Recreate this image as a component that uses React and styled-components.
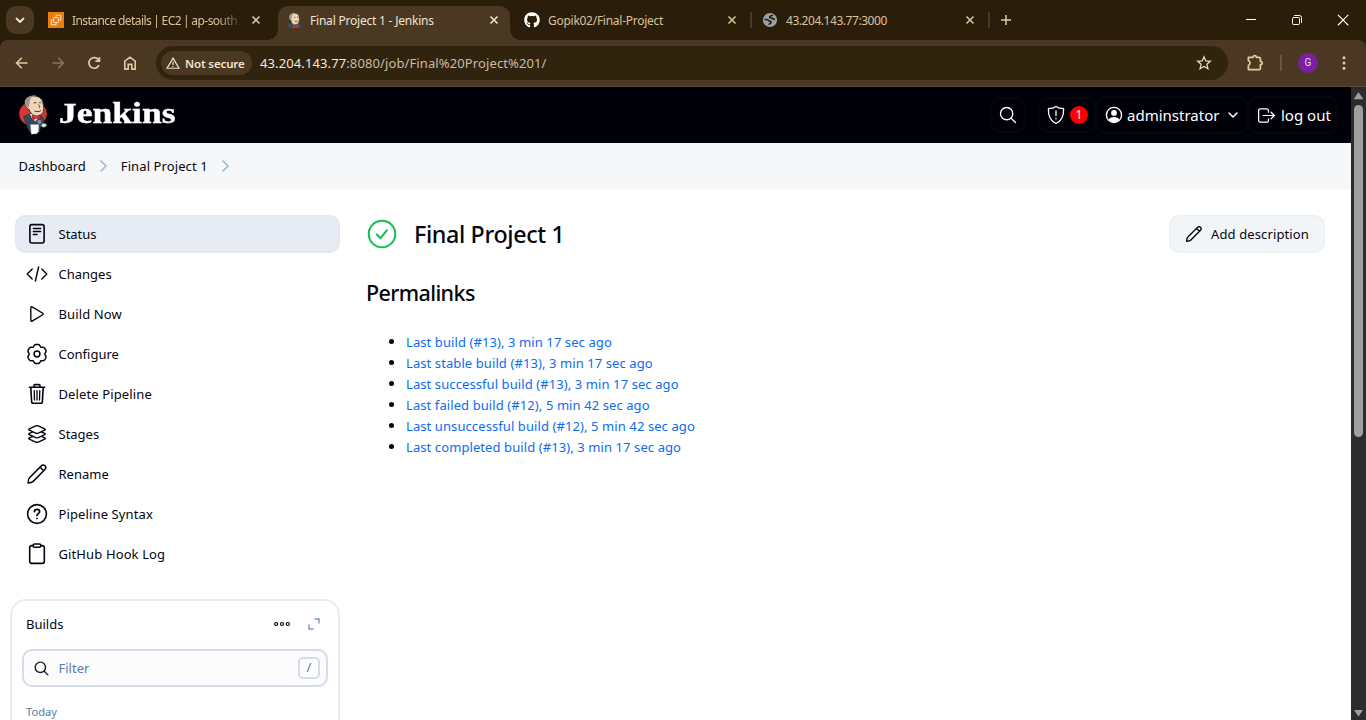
import React from "react";
import styled, { createGlobalStyle, css } from "styled-components";
import { FaGithub } from "react-icons/fa";

const Global = createGlobalStyle`
  * { box-sizing: border-box; }
  html, body { margin: 0; height: 720px; overflow: hidden; background: #fff; }
  body { font-family: "Noto Sans", "Open Sans", sans-serif; font-size: 13px; color: #05050f; }
  svg { display: block; flex: none; }
`;

const Screen = styled.div`
  width: 1366px;
  height: 720px;
  display: flex;
  flex-direction: column;
  overflow: hidden;
`;

const Text = styled.span`
  white-space: nowrap;
  letter-spacing: ${(p) => p.$ls || 0}px;
`;

/* ---------- browser chrome ---------- */
const TabStrip = styled.div`
  height: 40px;
  flex: none;
  display: flex;
  align-items: center;
  padding-left: 6px;
  background: #2a1e0a;
`;
const TabSearch = styled.div`
  width: 28px;
  height: 28px;
  margin-right: 6px;
  border-radius: 10px;
  background: #4a3822;
  display: flex;
  align-items: center;
  justify-content: center;
`;
const Tab = styled.div`
  position: relative;
  width: 232px;
  height: 34px;
  margin: 6px 6px 0 0;
  padding: 0 8px 6px;
  display: flex;
  align-items: center;
  gap: 8px;
  font-size: 12px;
  color: #dac19c;
  ${(p) =>
    p.$active &&
    css`
      color: #f0e4d3;
      background: #4a3822;
      border-radius: 10px 10px 0 0;
      &::before, &::after {
        content: "";
        position: absolute;
        bottom: 0;
        width: 10px;
        height: 10px;
      }
      &::before { left: -10px; background: radial-gradient(circle at 0 0, transparent 9.5px, #4a3822 10px); }
      &::after { right: -10px; background: radial-gradient(circle at 100% 0, transparent 9.5px, #4a3822 10px); }
    `}
`;
const TabTitle = styled.div`
  width: 168px;
  white-space: nowrap;
  letter-spacing: ${(p) => p.$ls || 0}px;
  ${(p) => p.$fade && css`word-spacing: -0.4px; mask-image: linear-gradient(90deg, #000 145px, transparent 172px);`}
`;
const TabDivider = styled.i`
  width: 2px;
  height: 16px;
  margin: 0 2px 0 -4px;
  background: #4a3822;
`;
const WindowButtons = styled.div`
  margin-left: auto;
  display: flex;
  & > * { width: 46px; display: flex; justify-content: center; align-items: center; }
`;
const NewTab = styled.div`
  width: 28px;
  display: flex;
  justify-content: center;
`;

const ToolbarBack = styled.div`
  flex: none;
  background: #2a1e0a;
`;
const Toolbar = styled.div`
  height: 47px;
  padding-left: 4px;
  display: flex;
  align-items: center;
  background: #4a3822;
  border-radius: 8px 8px 0 0;
  border-bottom: 1px solid #5b4a35;
  & > * { flex: none; }
`;
const ToolButton = styled.div`
  width: 36px;
  display: flex;
  justify-content: center;
`;
const MenuButton = styled.div`
  width: 48px;
  padding-left: 18px;
`;
const Omnibox = styled.div`
  width: 1072px;
  height: 34px;
  margin: 0 9px 0 8px;
  padding: 0 16px 0 5px;
  display: flex;
  align-items: center;
  border-radius: 17px;
  background: #30240f;
`;
const SecurityChip = styled.div`
  width: 91px;
  height: 24px;
  margin-right: 8px;
  padding-left: 5px;
  display: flex;
  align-items: center;
  gap: 5px;
  border-radius: 12px;
  background: #4a3822;
  color: #f0e4d3;
  font-size: 11.5px;
  font-weight: 600;
`;
const Url = styled.div`
  flex: 1;
  font-size: 13px;
  color: #c9bba6;
  white-space: nowrap;
  letter-spacing: 0.11px;
  b { font-weight: 400; color: #f4eadc; }
`;
const ToolDivider = styled.i`
  width: 2px;
  height: 16px;
  margin: 0 16px 0 7px;
  background: #6b563a;
`;
const Avatar = styled.div`
  width: 20px;
  height: 20px;
  border-radius: 50%;
  background: #7b1fa2;
  color: #efdcf5;
  font: 10px/20px Roboto, sans-serif;
  text-align: center;
`;

/* ---------- page ---------- */
const Viewport = styled.div`
  flex: 1;
  min-height: 0;
  display: flex;
`;
const Page = styled.div`
  width: 1351px;
  display: flex;
  flex-direction: column;
`;
const ScrollTrack = styled.div`
  width: 15px;
  display: flex;
  flex-direction: column;
  align-items: center;
  padding: 5px 0 3px;
  background: #2c2c2c;
`;
const ScrollThumb = styled.div`
  width: 9px;
  height: 332px;
  margin: 5px 0 auto 0;
  border-radius: 5px;
  background: #9f9f9f;
`;

const Header = styled.header`
  height: 56px;
  flex: none;
  padding: 0 13px 0 18px;
  display: flex;
  align-items: center;
  background: #000008;
  color: #fff;
`;
const Brand = styled.div`
  margin: -4px auto 0 11px;
  font: 700 29px/40px "Liberation Serif", serif;
  -webkit-text-stroke: 0.4px #fff;
  transform: scaleX(1.225);
  transform-origin: 0 50%;
`;
const HeaderButton = styled.div`
  width: ${(p) => p.$w}px;
  height: ${(p) => p.$h || 38}px;
  margin-right: ${(p) => p.$mr || 0}px;
  padding: 0 ${(p) => p.$px || 7}px;
  display: flex;
  align-items: center;
  justify-content: ${(p) => (p.$center ? "center" : "flex-start")};
  gap: ${(p) => p.$gap || 4}px;
  border: 2px solid #06060f;
  border-radius: 10px;
  font-size: 15px;
  ${Text} { margin-right: auto; }
`;
const Badge = styled.div`
  width: 18px;
  height: 18px;
  flex: none;
  border-radius: 50%;
  background: #fe0000;
  font-size: 12px;
  line-height: 18px;
  text-align: center;
`;

const Breadcrumbs = styled.nav`
  height: 46px;
  flex: none;
  padding-left: 18.5px;
  display: flex;
  align-items: center;
  background: #f6f7f9;
  svg { margin: 0 12px; }
`;

const Body = styled.div`
  flex: 1;
  min-height: 0;
  display: flex;
  padding: 26px 26px 0 10px;
`;
const Sidebar = styled.aside`
  width: 330px;
  display: flex;
  flex-direction: column;
`;
const Tasks = styled.div`
  display: flex;
  flex-direction: column;
  gap: 2px;
  padding-left: 5px;
`;
const Task = styled.div`
  height: 38px;
  padding-left: 11px;
  display: flex;
  align-items: center;
  gap: 10.5px;
  border-radius: 10px;
  ${(p) => p.$active && css`background: #e7ebf3; border: 2px solid #e3e8f1; padding-left: 9px;`}
`;
const Builds = styled.section`
  height: 200px;
  flex: none;
  margin-top: 26px;
  padding: 9px 10px;
  border: 2px solid #e8ecf3;
  border-radius: 16px;
`;
const BuildsHead = styled.div`
  height: 28px;
  padding: 0 6px 0 4px;
  display: flex;
  align-items: center;
  span { margin-right: auto; }
  svg + svg { margin-left: 15px; }
`;
const Filter = styled.div`
  height: 38px;
  margin-top: 11px;
  padding: 0 6px 0 8.5px;
  display: flex;
  align-items: center;
  border: 2px solid #d6dbe9;
  border-radius: 10px;
  background: #fcfcfd;
  color: #5c7aaa;
  span { margin: 0 auto 0 9px; }
`;
const Key = styled.kbd`
  width: 22px;
  height: 22px;
  border: 2px solid #d6dbe9;
  border-radius: 5px;
  font: 13px/17px "Noto Sans", sans-serif;
  text-align: center;
`;
const Day = styled.div`
  margin: 17px 0 0 4px;
  font-size: 11.2px;
  line-height: 16px;
  color: #5c7aaa;
`;

const Main = styled.main`
  flex: 1;
  padding-left: 26px;
`;
const TitleRow = styled.div`
  height: 38px;
  display: flex;
  align-items: center;
  padding-left: 1px;
`;
const Title = styled.h1`
  margin: 0 auto 0 17px;
  font-size: 23.3px;
  font-weight: 500;
  line-height: 38px;
  letter-spacing: -0.38px;
`;
const Subtitle = styled.h2`
  margin: 25px 0 23px;
  font-size: 21.5px;
  font-weight: 500;
  line-height: 30px;
  letter-spacing: -0.6px;
`;
const DescriptionButton = styled.div`
  width: 156px;
  height: 38px;
  padding-left: 14px;
  display: flex;
  align-items: center;
  gap: 8px;
  border: 2px solid #edf1f5;
  border-radius: 10px;
  background: #f2f5f8;
`;
const Links = styled.ul`
  margin: 0;
  padding: 0 0 0 23px;
  list-style: none;
`;
const LinkRow = styled.li`
  height: 21px;
  display: flex;
  align-items: center;
  color: #0b6cf2;
  &::before {
    content: "";
    width: 5px;
    height: 5px;
    margin-right: 12px;
    border-radius: 50%;
    background: #05050f;
  }
`;

/* ---------- icons ---------- */
const Line = ({ s = 16, h, vb = "0 0 16 16", w = 1.5, c = "currentColor", children }) => (
  <svg width={s} height={h || s} viewBox={vb} fill="none" stroke={c} strokeWidth={w} strokeLinecap="round" strokeLinejoin="round">
    {children}
  </svg>
);
const Ion = ({ s = 22, w = 32, c, children }) => (
  <Line s={s} vb="0 0 512 512" w={w} c={c}>{children}</Line>
);
const CloseX = ({ c = "#dac19c" }) => (
  <Line w={1.6} c={c}><path d="M4.5 4.5l7 7M11.5 4.5l-7 7" strokeLinecap="butt" /></Line>
);
const SearchGlyph = ({ s, w = 32, c }) => (
  <Ion s={s} w={w} c={c}><path d="M221 64a157 157 0 10157 157A157 157 0 00221 64zM338 338l110 110" /></Ion>
);
const Chevron = ({ c = "#a5b8d8" }) => (
  <Line s={11} vb="0 0 11 16" h={16} c={c} w={1.7}><path d="M3 3l5 5-5 5" /></Line>
);
/* Six-lobed gear outline: notches fall every 60 degrees, starting at the right. */
const gearPath =
  Array.from({ length: 120 }, (_, i) => {
    const a = (i * Math.PI) / 60;
    const r = 9.6 - 1.8 * Math.pow(Math.abs(Math.cos(3 * a)), 5);
    return `${i ? "L" : "M"}${(11 + r * Math.cos(a)).toFixed(2)} ${(11 + r * Math.sin(a)).toFixed(2)}`;
  }).join("") + "Z";

const Pencil = ({ s = 22 }) => (
  <Line s={s} vb="0 0 22 22" w={s > 20 ? 1.5 : 1.7}>
    <path d="M2 20c.1-1.900.300-4.100 1.500-5.300L15.300 2.900c1-1 2.700-1.100 3.700-.1s.9 2.700-.1 3.700L7.200 18.400C6 19.600 3.900 19.900 2 20zM14.200 4.300l3.400 3.400" />
  </Line>
);

const taskIcons = {
  status: <Line s={22} vb="0 0 22 22" w={1.6}><rect x="3.9" y="1.6" width="14.2" height="18.4" rx="2" /><path d="M7.4 5.5h7.2M7.4 8.5h7.2M7.4 11.5h3.6" /></Line>,
  changes: <Line s={22} vb="0 0 22 22" w={1.4}><path d="M6.2 6L1.2 11l5 5M15.8 6l5 5-5 5M12.6 4L9.4 18" /></Line>,
  play: <Ion><path d="M112 111v290c0 17.44 17 28.52 31 20.16l247.9-148.37c12.12-7.25 12.12-26.33 0-33.58L143 90.84c-14-8.36-31 2.72-31 20.16z" /></Ion>,
  gear: <Line s={22} vb="0 0 22 22" w={1.5}><path d={gearPath} /><circle cx="11" cy="11" r="2.9" /></Line>,
  trash: <Line s={22} vb="0 0 22 22" w={1.6}><path d="M3.4 4.2h15.2M8 4V2.6a1 1 0 011-1h4a1 1 0 011 1V4M4.8 4.4l.8 14a1.8 1.8 0 001.8 1.8h7.2a1.8 1.8 0 001.8-1.8l.8-14" /><path d="M8.2 7.6l.3 9.4M11 7.6V17M13.8 7.6l-.3 9.4" strokeWidth="1.3" /></Line>,
  layers: <Ion><path d="M434.8 137.65l-149.36-68.1c-16.19-7.4-42.69-7.4-58.88 0L77.3 137.65c-17.6 8-17.6 21.09 0 29.09l148 67.5c16.89 7.7 44.69 7.7 61.58 0l148-67.5c17.52-8 17.52-21.1-.08-29.09zM160 308.52l-82.7 37.11c-17.6 8-17.6 21.1 0 29.1l148 67.5c16.89 7.69 44.69 7.69 61.58 0l148-67.5c17.6-8 17.6-21.1 0-29.1l-79.94-38.47M160 204.48l-82.8 37.16c-17.6 8-17.6 21.1 0 29.1l148 67.49c16.89 7.7 44.69 7.7 61.58 0l148-67.49c17.7-8 17.7-21.1.1-29.1L352 204.48" /></Ion>,
  pencil: <Pencil />,
  help: <Line s={22} vb="0 0 22 22" w={1.6}><circle cx="11" cy="11" r="9.4" /><path d="M8.4 8.6c.1-3 5.2-3 5.2 0 0 2-2.6 2-2.6 4" strokeWidth="1.8" /><circle cx="11" cy="15.6" r=".5" fill="currentColor" strokeWidth="1" /></Line>,
  clipboard: <Line s={22} vb="0 0 22 22" w={1.6}><path d="M7.2 2.6H5.6a1.9 1.9 0 00-1.9 1.9v14a1.9 1.9 0 001.9 1.9h10.8a1.9 1.9 0 001.9-1.9v-14a1.9 1.9 0 00-1.9-1.9h-1.6" /><rect x="7.2" y="1" width="7.6" height="3.2" rx="1.4" /></Line>,
};

const Butler = () => (
  <svg width="30" height="42" viewBox="0 0 30 42">
    <ellipse cx="15" cy="19.8" rx="13.8" ry="12.4" fill="#d33833" />
    <path d="M5.500 22.500l6-2.500 4 3 6-2.500 4 3.500.500 5-3.500 4.500-1 4.500H11.500L8.500 31z" fill="#33495c" stroke="#1d2c38" strokeWidth=".5" />
    <path d="M12 20L14 24.500l3.500 3 3.500-4-.500-3.500z" fill="#e9ecee" />
    <path d="M7 6.400C9 .9 20.500.2 23.600 5.600c1.900 3.200 2.500 8.600 1.700 11.800-.9 3.600-4.800 5.100-8.400 4.200-3.500-1-4.800-3.600-5.800-6C7.800 14.500 6.300 9 7 6.400z" fill="#f0d6b7" stroke="#231f20" strokeWidth=".8" />
    <path d="M6.900 7.600C7.400 3.200 13 .9 18.400 1.700c-3.900.7-6.200 2-6.600 5.100-.2 2.500-.3 4-1.100 6.600-3-.2-4.200-3.600-3.800-5.800z" fill="#9a9894" />
    <path d="M23 5.200c1.200 1.400 1.800 3.200 1.900 5.200" stroke="#77746f" strokeWidth="1.100" fill="none" />
    <path d="M15.600 9.200c.9-.8 2.100-.8 3-.2M21 9c.7-.6 1.500-.5 2.100.1M20.600 10.600c1.100 1.200 1.700 2.500.3 3.200M16.500 17c2.300 1.200 4.800.6 6.500-.500" stroke="#231f20" strokeWidth=".9" fill="none" />
    <path d="M14 21.300l4 1.600 4.200-2.200.5 4.600-4.400-1-3.900 1.900z" fill="#e0222c" stroke="#7b1418" strokeWidth=".5" />
    <path d="M18 26.500l4.800-1.200 1.300 3.600-3.200 1.900z" fill="#7693a8" stroke="#1d2c38" strokeWidth=".5" />
    <path d="M23.200 31c.9-2.200 5-2 5.300-.2.100 1.600-1.200 2.600-3.200 2.400-1.300-.1-2.200-1-2.100-2.200z" fill="#e6e9eb" stroke="#55606a" strokeWidth=".6" />
    <path d="M12.500 30.400h8.300l-.300 7-1.700 2.400-5.600.400z" fill="#fff" stroke="#8d969e" strokeWidth=".4" />
  </svg>
);
const ButlerFavicon = () => (
  <svg width="16" height="16" viewBox="0 0 16 16">
    <path d="M1.2 16l.6-3.2L5.2 11h6.6l2.6 2 .2 3z" fill="#335061" />
    <path d="M3.4 4C4.4.6 11.4.2 12.7 3.4c.8 2.6.7 6-.2 7.6-1.5 2.2-5 2-6.3.4-.7-1-.9-2-1.1-3C3.3 7.8 3 5.4 3.4 4z" fill="#f0d6b7" stroke="#3c3630" strokeWidth=".5" />
    <path d="M3.2 5C3.6 1.8 6.5.5 9.4.9 6.9 1.7 5.9 3 5.7 5.2L5.1 8C3.4 7.5 3 6.2 3.2 5z" fill="#9b9a97" />
    <path d="M8.3 5.3h1.2M11 5.2h.9M8.6 9c1 .7 2.2.6 3 .1" stroke="#3c3630" strokeWidth=".8" fill="none" />
    <path d="M7 13.2l2.6 1 2.6-1.4.4 2.9-2.9-.8-2.5 1z" fill="#d33833" />
  </svg>
);
const Ec2Favicon = () => (
  <svg width="16" height="16" viewBox="0 0 16 16">
    <rect width="16" height="16" fill="#ed7b12" />
    <g fill="none" stroke="#fff3e2" strokeWidth=".9"><rect x="5.600" y="5.600" width="4.800" height="4.800" rx=".6" /><path d="M8 4.800V3.300h4.800v4.800h-1.600M4.800 8H3.300v4.800h4.800v-1.600" /></g>
  </svg>
);
const GlobeFavicon = () => (
  <svg width="16" height="16" viewBox="0 0 16 16">
    <circle cx="8" cy="8" r="7.1" fill="#9aa0a6" />
    <path d="M2.600 7.600c1.600-.2 3.400-.1 4.200 1 .6 1.100 2.300.5 2.400 1.700 0 1.100-1.900 1-2.400 2.500M10.800 3c-.8 1-3.500.6-3.300 2.100.2 1.300 2.400.3 3.200 1.500.6 1 1.500.8 2.300.5" stroke="#2a1e0a" strokeWidth="1.600" fill="none" />
  </svg>
);

const tabs = [
  { icon: <Ec2Favicon />, title: "Instance details | EC2 | ap-south", fade: true, ls: -0.56 },
  { icon: <ButlerFavicon />, title: "Final Project 1 - Jenkins", active: true, ls: -0.21 },
  { icon: <FaGithub size={16} color="#fff" />, title: "Gopik02/Final-Project", divider: true, ls: -0.27 },
  { icon: <GlobeFavicon />, title: "43.204.143.77:3000", divider: true, ls: -0.45 },
];
const tasks = [
  ["status", "Status"],
  ["changes", "Changes"],
  ["play", "Build Now"],
  ["gear", "Configure"],
  ["trash", "Delete Pipeline"],
  ["layers", "Stages"],
  ["pencil", "Rename"],
  ["help", "Pipeline Syntax"],
  ["clipboard", "GitHub Hook Log"],
];
const links = [
  "Last build (#13), 3 min 17 sec ago",
  "Last stable build (#13), 3 min 17 sec ago",
  "Last successful build (#13), 3 min 17 sec ago",
  "Last failed build (#12), 5 min 42 sec ago",
  "Last unsuccessful build (#12), 5 min 42 sec ago",
  "Last completed build (#13), 3 min 17 sec ago",
];

const tan = "#e2c9a5";

export default function App() {
  return (
    <Screen>
      <Global />
      <TabStrip>
        <TabSearch><Line c="#f0e4d3" w={1.8}><path d="M4.5 6.5L8 10l3.5-3.5" /></Line></TabSearch>
        {tabs.map((t) => (
          <React.Fragment key={t.title}>
            <Tab $active={t.active}>
              {t.icon}
              <TabTitle $fade={t.fade} $ls={t.ls}>{t.title}</TabTitle>
              <CloseX c={t.active ? "#f0e4d3" : undefined} />
            </Tab>
            {t.divider && <TabDivider />}
          </React.Fragment>
        ))}
        <NewTab><Line c={tan} w={1.5}><path d="M8 3v10M3 8h10" strokeLinecap="butt" /></Line></NewTab>
        <WindowButtons>
          <div><Line c="#fff" w={1}><path d="M3 7.5h10" strokeLinecap="butt" /></Line></div>
          <div><Line c="#fff" w={1}><rect x="3.5" y="5.5" width="7" height="7" rx="1" /><path d="M5.5 3.5h5a2 2 0 012 2v5" /></Line></div>
          <div><Line c="#fff" w={1.1}><path d="M3.2 3.2l9.8 9.8M13 3.2L3.2 13" /></Line></div>
        </WindowButtons>
      </TabStrip>

      <ToolbarBack>
        <Toolbar>
          <ToolButton><Line c={tan} w={1.6}><path d="M13.5 8H2.8M7.8 2.8L2.6 8l5.2 5.2" strokeLinecap="butt" strokeLinejoin="miter" /></Line></ToolButton>
          <ToolButton><Line c="#8a7557" w={1.6}><path d="M2.5 8h10.7M8.2 2.8L13.4 8l-5.2 5.2" strokeLinecap="butt" strokeLinejoin="miter" /></Line></ToolButton>
          <ToolButton><Line c={tan} w={1.7}><path d="M13 10.2A5.3 5.3 0 1112.6 5L13.4 6M13.4 2.2v4H9.4" strokeLinecap="butt" strokeLinejoin="miter" /></Line></ToolButton>
          <ToolButton><Line c={tan} w={1.6}><path d="M2.8 6.2L8 2.2l5.2 4v7.9H9.8V9.4H6.2v4.7H2.8z" strokeLinejoin="miter" /></Line></ToolButton>
          <Omnibox>
            <SecurityChip>
              <Line s={14} c="#f0e4d3" w={1.4}><path d="M8 2.4L14.8 14H1.2zM8 6.6v3.6M8 11.4v1.2" strokeLinecap="butt" strokeLinejoin="miter" /></Line>
              <Text $ls={-0.13}>Not secure</Text>
            </SecurityChip>
            <Url><b>43.204.143.77</b>:8080/job/Final%20Project%201/</Url>
            <Line c="#e8d9c2" w={1.3}><path d="M8 1.8l1.8 4.1 4.5.4-3.4 3 1 4.4L8 11.4l-3.9 2.3 1-4.4-3.4-3 4.5-.4z" strokeLinejoin="miter" /></Line>
          </Omnibox>
          <ToolButton>
            <Line s={18} vb="0 0 18 18" c={tan} w={1.7}><path d="M2.400 3.400h4.600a1.700 1.700 0 013.400 0h2.800a1.200 1.200 0 011.200 1.200v2.700a1.700 1.700 0 010 3.400v3.700a1.200 1.200 0 01-1.200 1.200H2.400v-4.400a2.300 2.300 0 000-4.400z" /></Line>
          </ToolButton>
          <ToolDivider />
          <Avatar>G</Avatar>
          <MenuButton>
            <svg width="16" height="16" viewBox="0 0 16 16" fill={tan}><circle cx="8" cy="2.800" r="1.500" /><circle cx="8" cy="8" r="1.500" /><circle cx="8" cy="13.200" r="1.500" /></svg>
          </MenuButton>
        </Toolbar>
      </ToolbarBack>

      <Viewport>
        <Page>
          <Header>
            <Butler />
            <Brand>Jenkins</Brand>
            <HeaderButton $w={36} $h={36} $mr={12} $center><SearchGlyph s={20} w={34} /></HeaderButton>
            <HeaderButton $w={58} $h={36} $px={7} $gap={5}>
              <Line s={18} h={20} vb="0 0 18 20" w={1.3}><path d="M9 1.4c2 1.5 4.6 2.2 7.6 2.3.3 6.800-1.800 12-7.600 14.800C3.200 15.700 1.100 10.500 1.400 3.700 4.400 3.600 7 2.900 9 1.400zM9 6v4.700M9 13.400v.5" /></Line>
              <Badge>1</Badge>
            </HeaderButton>
            <HeaderButton $w={152}>
              <svg width="18" height="18" viewBox="0 0 18 18"><circle cx="9" cy="9" r="7.6" fill="none" stroke="#fff" strokeWidth="1.4" /><circle cx="9" cy="6.900" r="2.900" fill="#fff" /><path d="M3.600 13.600c1.300-3.600 9.500-3.600 10.800 0C11.500 17 6.500 17 3.600 13.600z" fill="#fff" /></svg>
              <Text>adminstrator</Text>
              <Line s={12} vb="0 0 12 12" w={1.500}><path d="M2 4l4 4 4-4" /></Line>
            </HeaderButton>
            <HeaderButton $w={90} $px={6}>
              <Ion s={21} w={30}><path d="M304 336v40a40 40 0 01-40 40H104a40 40 0 01-40-40V136a40 40 0 0140-40h152c22 0 48 18 48 40v40M368 336l80-80-80-80M176 256h256" /></Ion>
              <Text>log out</Text>
            </HeaderButton>
          </Header>

          <Breadcrumbs>
            <Text>Dashboard</Text><Chevron />
            <Text $ls={0.1}>Final Project 1</Text><Chevron />
          </Breadcrumbs>

          <Body>
            <Sidebar>
              <Tasks>
                {tasks.map(([icon, label], i) => (
                  <Task key={label} $active={i === 0}>
                    {taskIcons[icon]}
                    <Text $ls={label.includes(" ") ? 0.12 : 0}>{label}</Text>
                  </Task>
                ))}
              </Tasks>
              <Builds>
                <BuildsHead>
                  <Text>Builds</Text>
                  <Line s={18} vb="0 0 18 18" w={1.200}><circle cx="3.200" cy="9" r="1.500" /><circle cx="9" cy="9" r="1.500" /><circle cx="14.800" cy="9" r="1.500" /></Line>
                  <Line s={16} c="#7f9cc4" w={1.500}><path d="M8.500 3h4.500v4.500M3 8.500V13h4.500" strokeLinecap="butt" strokeLinejoin="miter" /></Line>
                </BuildsHead>
                <Filter>
                  <SearchGlyph s={17} w={42} c="#1b1b26" />
                  <Text>Filter</Text>
                  <Key>/</Key>
                </Filter>
                <Day>Today</Day>
              </Builds>
            </Sidebar>

            <Main>
              <TitleRow>
                <Line s={30} vb="0 0 30 30" c="#0cc14f" w={2}><circle cx="15" cy="15" r="13.300" /><path d="M9.800 15.500l3.700 3.700 6.500-8" /></Line>
                <Title>Final Project 1</Title>
                <DescriptionButton><Pencil s={18} /><Text $ls={0.12}>Add description</Text></DescriptionButton>
              </TitleRow>
              <Subtitle>Permalinks</Subtitle>
              <Links>{links.map((l) => <LinkRow key={l}><Text $ls={0.09}>{l}</Text></LinkRow>)}</Links>
            </Main>
          </Body>
        </Page>
        <ScrollTrack>
          <svg width="9" height="8" viewBox="0 0 9 8"><path d="M4.500 .5L9 7H0z" fill="#9f9f9f" stroke="#9f9f9f" strokeLinejoin="round" strokeWidth=".5" /></svg>
          <ScrollThumb />
          <svg width="9" height="8" viewBox="0 0 9 8"><path d="M4.500 7.500L9 1H0z" fill="#9f9f9f" /></svg>
        </ScrollTrack>
      </Viewport>
    </Screen>
  );
}
